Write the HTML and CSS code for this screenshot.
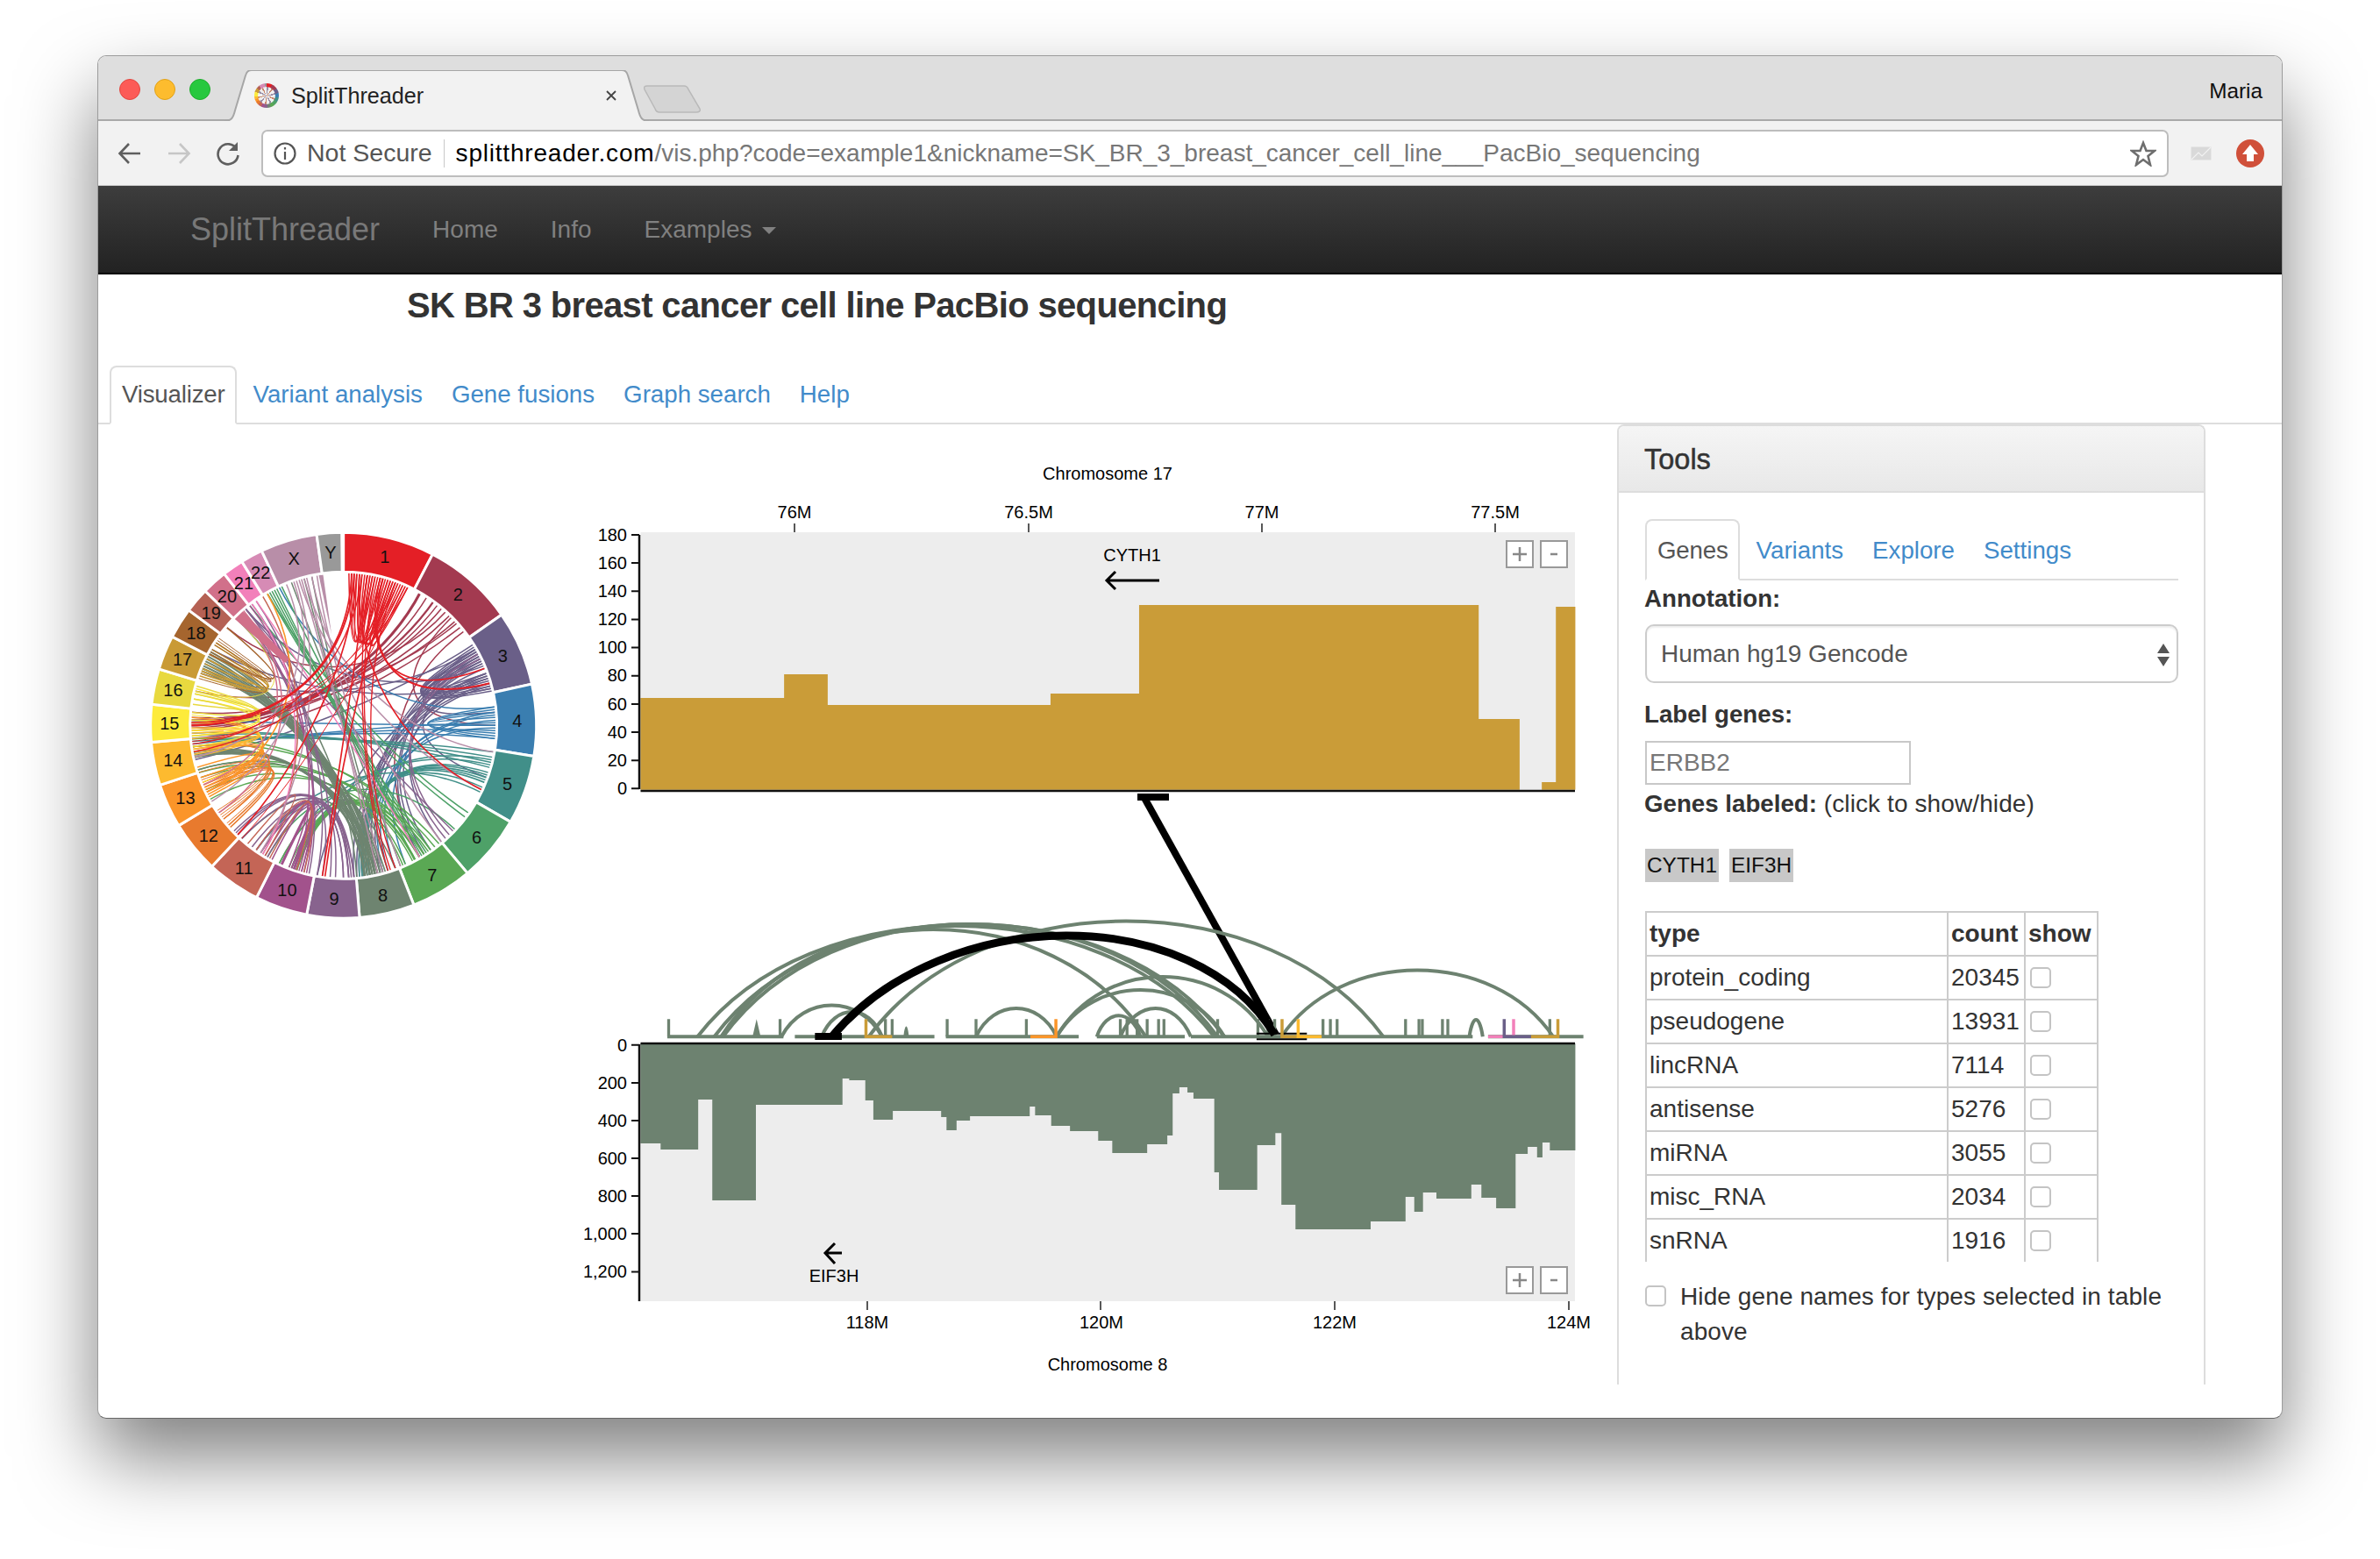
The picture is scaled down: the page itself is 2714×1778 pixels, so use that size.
FILE: index.html
```html
<!DOCTYPE html>
<html lang="en">
<head>
<meta charset="utf-8">
<title>SplitThreader</title>
<link rel="stylesheet" href="styles.css">
<script src="chart.js" defer></script>
</head>
<body>
<div class="window">
  <div class="tabstrip">
    <div class="lights"><i class="light red"></i><i class="light amber"></i><i class="light green"></i></div>
    <div class="chrome-tab">
      <svg class="tab-shape" viewBox="0 0 484 58" preserveAspectRatio="none"><path d="M0 58C8 58 10 54 12 46L24 6C25 2 27 0 31 0H453C457 0 459 2 460 6L472 46C474 54 476 58 484 58" /></svg>
      <span class="favicon"></span>
      <span class="tab-title">SplitThreader</span>
      <svg class="tab-close" viewBox="0 0 12 12"><path d="M1 1L11 11M11 1L1 11"/></svg>
    </div>
    <svg class="new-tab" viewBox="0 0 66 32"><path d="M4 1H46C49 1 50 2 51 5L64 27C65 30 63 31 60 31H18C15 31 14 30 13 27L1 5C0 2 1 1 4 1Z"/></svg>
    <span class="profile">Maria</span>
  </div>
  <div class="toolbar">
    <svg class="tool-icon" viewBox="0 0 28 28"><path d="M26 14H3M13 3L2.500 14L13 25"/></svg>
    <svg class="tool-icon faded" viewBox="0 0 28 28"><path d="M2 14H25M15 3L25.500 14L15 25"/></svg>
    <svg class="tool-icon" viewBox="0 0 28 28"><path d="M24 9A11.500 11.500 0 1 0 25.500 16"/><path class="solid" d="M25 1V11H15Z"/></svg>
    <div class="omnibox">
      <svg class="info-icon" viewBox="0 0 26 26"><circle cx="13" cy="13" r="11.500"/><path d="M13 11V20M13 6V8.500"/></svg>
      <span class="not-secure">Not Secure</span>
      <span class="omni-sep"></span>
      <span class="url"><span class="url-host">splitthreader.com</span>/vis.php?code=example1&amp;nickname=SK_BR_3_breast_cancer_cell_line___PacBio_sequencing</span>
      <svg class="star" viewBox="0 0 30 30"><path d="M15 3L18.500 12H28L20.500 18L23 28L15 22L7 28L9.500 18L2 12H11.500Z"/></svg>
    </div>
    <svg class="mail-icon" viewBox="0 0 24 16"><rect x="0" y="0" width="24" height="16"/><path d="M1 15L9 7L13 11L23 1"/></svg>
    <svg class="update-icon" viewBox="0 0 32 32"><circle cx="16" cy="16" r="16"/><path d="M16 6L25 17H20V25H12V17H7Z"/></svg>
  </div>
  <nav class="navbar">
    <span class="brand">SplitThreader</span>
    <a class="nav-link">Home</a>
    <a class="nav-link">Info</a>
    <a class="nav-link">Examples<i class="caret"></i></a>
  </nav>
  <main class="content">
    <h1 class="page-title">SK BR 3 breast cancer cell line PacBio sequencing</h1>
    <ul class="tabs main-tabs">
      <li class="tab active">Visualizer</li>
      <li class="tab">Variant analysis</li>
      <li class="tab">Gene fusions</li>
      <li class="tab">Graph search</li>
      <li class="tab">Help</li>
    </ul>
    <div class="workspace">
      <svg class="circos" viewBox="0 0 1500 1500">
        <g id="chords"></g>
        <g id="segments"></g>
        <g id="segment-labels"></g>
      </svg>
      <svg class="genome" viewBox="650 510 1194 1080">
        <text class="chart-text" x="1263" y="547" text-anchor="middle">Chromosome 17</text>
        <text class="chart-text" x="906" y="591" text-anchor="middle">76M</text>
        <text class="chart-text" x="1173" y="591" text-anchor="middle">76.5M</text>
        <text class="chart-text" x="1439" y="591" text-anchor="middle">77M</text>
        <text class="chart-text" x="1705" y="591" text-anchor="middle">77.5M</text>
        <path class="tick" d="M906 597V607M1173 597V607M1439 597V607M1705 597V607"/>
        <rect class="plot-bg" x="730.500" y="607" width="1065.500" height="295"/>
        <path class="bars-gold" transform="translate(650 510) scale(.7653 .3333)" d="M105 1172V858H319V777H384V882H716V843H848V540H1354V930H1415V1172H1448V1146H1469V546H1498V1172Z"/>
        <path class="axis" d="M730.500 902H1796M729 610V900"/>
        <path class="tick-y" d="M720 610H729M720 642.100H729M720 674.300H729M720 706.400H729M720 738.600H729M720 770.700H729M720 802.900H729M720 835H729M720 867.200H729M720 899.300H729"/>
        <g class="y-labels">
          <text class="chart-text" x="715" y="617">180</text>
          <text class="chart-text" x="715" y="649">160</text>
          <text class="chart-text" x="715" y="681">140</text>
          <text class="chart-text" x="715" y="713">120</text>
          <text class="chart-text" x="715" y="745">100</text>
          <text class="chart-text" x="715" y="777">80</text>
          <text class="chart-text" x="715" y="810">60</text>
          <text class="chart-text" x="715" y="842">40</text>
          <text class="chart-text" x="715" y="874">20</text>
          <text class="chart-text" x="715" y="906">0</text>
        </g>
        <text class="chart-text" x="1291" y="640" text-anchor="middle">CYTH1</text>
        <path class="gene-arrow" d="M1322 662H1262M1272 652L1262 662L1272 672"/>
        <g class="zoom-btn"><rect x="1718" y="617" width="30" height="30"/><path d="M1733 624V640M1725 632H1741"/></g>
        <g class="zoom-btn"><rect x="1757" y="617" width="30" height="30"/><path d="M1768 632H1776"/></g>

        <path class="connector" d="M1305 910L1455 1180"/>
        <path class="bracket" d="M1297 909H1333"/>
        <g transform="translate(650 1030) scale(.7653 .3333)">
          <path class="track" d="M145 457H318M335 457H543M560 457H758M785 457H916M925 457H1345M1368 457H1510"/>
          <path class="stem" d="M147 457V397M313 457V397M470 457V397M480 457V397M562 457V397M605 457V397M680 457V397M820 457V397M830 457V397M845 457V397M860 457V397M877 457V397M885 457V397M965 457V397M1025 457V397M1040 457V397M1050 457V397M1122 457V397M1133 457V397M1143 457V397M1245 457V397M1265 457V397M1270 457V397M1300 457V397M1308 457V397M1460 457V397"/>
          <path class="stem-fill" d="M272 457L278 397L284 457ZM497 457C499 410 503 410 505 457Z"/>
          <g class="arc-set">
            <path d="M190 457C359 -48 791 -48 960 457"/>
            <path d="M215 457C382 -56 808 -56 975 457"/>
            <path d="M228 457C390 -56 803 -56 965 457"/>
            <path d="M225 457C364 -32 719 -32 858 457"/>
            <path d="M445 457C614 -70 1043 -70 1212 457"/>
            <path d="M1060 457C1149 154 1376 154 1465 457"/>
            <path d="M315 457C348 314 432 314 465 457"/>
            <path d="M375 457C395 344 445 344 465 457"/>
            <path d="M605 457C631 328 699 328 725 457"/>
            <path d="M725 457C794 184 971 184 1040 457"/>
            <path d="M725 457C780 244 920 244 975 457"/>
            <path d="M785 457C799 361 836 361 850 457"/>
            <path d="M820 457C843 328 902 328 925 457"/>
            <path d="M1340 457C1345 380 1355 380 1360 457"/>
          </g>
          <path class="arc-strong" d="M390 457C560 -3 930 -3 1050 450"/>
          <path class="read-bar" d="M365 450H405M365 462H405"/>
          <path class="read-line" d="M1023 446H1098M1023 466H1098"/>
          <path class="mark gold" d="M441 397V457H480"/>
          <path class="mark orange" d="M724 397V457H686"/>
          <path class="mark gold" d="M1061 397V457H1085"/>
          <path class="mark yellow" d="M1085 397V457H1120"/>
          <path class="mark pink" d="M1406 397V457H1368"/>
          <path class="mark purple" d="M1392 397V457H1432"/>
          <path class="mark gold" d="M1472 397V457H1432"/>
        </g>

        <rect class="plot-bg" x="730.500" y="1190" width="1065.500" height="294"/>
        <path class="bars-green" transform="translate(650 1170) scale(.7653 .3333)" d="M105 60V402H135V423H191V252H212V597H277V270H406V180H416V186H440V255H452V321H481V291H553V312H561V357H576V324H596V309H685V276H693V306H717V342H745V360H787V393H808V435H860V405H890V375H898V231H908V210H920V228H929V249H960V501H967V561H1024V408H1051V367H1060V612H1081V696H1193V669H1245V585H1258V636H1271V570H1291V591H1343V543H1358V588H1380V624H1409V438H1427V414H1441V450H1449V399H1460V426H1498V60Z"/>
        <path class="axis" d="M730.500 1190H1796M729 1191V1484"/>
        <path class="tick-y" d="M720 1191.700H729M720 1235H729M720 1278H729M720 1321H729M720 1364H729M720 1407H729M720 1450.500H729"/>
        <g class="y-labels">
          <text class="chart-text" x="715" y="1199">0</text>
          <text class="chart-text" x="715" y="1242">200</text>
          <text class="chart-text" x="715" y="1285">400</text>
          <text class="chart-text" x="715" y="1328">600</text>
          <text class="chart-text" x="715" y="1371">800</text>
          <text class="chart-text" x="715" y="1414">1,000</text>
          <text class="chart-text" x="715" y="1457">1,200</text>
        </g>
        <path class="gene-arrow" d="M960 1429H943M952 1418L941 1429L952 1441"/>
        <text class="chart-text" x="951" y="1462" text-anchor="middle">EIF3H</text>
        <g class="zoom-btn"><rect x="1718" y="1445" width="30" height="30"/><path d="M1733 1452V1468M1725 1460H1741"/></g>
        <g class="zoom-btn"><rect x="1757" y="1445" width="30" height="30"/><path d="M1768 1460H1776"/></g>
        <path class="tick" d="M989 1484V1494M1255 1484V1494M1522 1484V1494M1789 1484V1494"/>
        <text class="chart-text" x="989" y="1515" text-anchor="middle">118M</text>
        <text class="chart-text" x="1256" y="1515" text-anchor="middle">120M</text>
        <text class="chart-text" x="1522" y="1515" text-anchor="middle">122M</text>
        <text class="chart-text" x="1789" y="1515" text-anchor="middle">124M</text>
        <text class="chart-text" x="1263" y="1563" text-anchor="middle">Chromosome 8</text>
      </svg>
      <aside class="panel">
        <h2 class="panel-head">Tools</h2>
        <div class="panel-body">
          <ul class="tabs tool-tabs">
            <li class="tab active">Genes</li>
            <li class="tab">Variants</li>
            <li class="tab">Explore</li>
            <li class="tab">Settings</li>
          </ul>
          <label class="field-label first">Annotation:</label>
          <div class="select">
            <span>Human hg19 Gencode</span>
            <svg class="select-arrows" viewBox="0 0 14 26"><path d="M7 0L14 11H0ZM0 15H14L7 26Z"/></svg>
          </div>
          <label class="field-label second">Label genes:</label>
          <input class="gene-input" type="text" placeholder="ERBB2">
          <p class="labeled"><b>Genes labeled:</b> (click to show/hide)</p>
          <div class="gene-tags"><span class="gene-tag">CYTH1</span><span class="gene-tag">EIF3H</span></div>
          <div class="table-clip">
            <table class="type-table">
              <colgroup><col class="col-type"><col class="col-count"><col class="col-show"></colgroup>
              <tr><th>type</th><th>count</th><th>show</th></tr>
              <tr><td>protein_coding</td><td>20345</td><td><input class="check" type="checkbox"></td></tr>
              <tr><td>pseudogene</td><td>13931</td><td><input class="check" type="checkbox"></td></tr>
              <tr><td>lincRNA</td><td>7114</td><td><input class="check" type="checkbox"></td></tr>
              <tr><td>antisense</td><td>5276</td><td><input class="check" type="checkbox"></td></tr>
              <tr><td>miRNA</td><td>3055</td><td><input class="check" type="checkbox"></td></tr>
              <tr><td>misc_RNA</td><td>2034</td><td><input class="check" type="checkbox"></td></tr>
              <tr><td>snRNA</td><td>1916</td><td><input class="check" type="checkbox"></td></tr>
            </table>
          </div>
          <div class="hide-row">
            <input class="check" type="checkbox">
            <span>Hide gene names for types selected in table above</span>
          </div>
        </div>
      </aside>
    </div>
  </main>
</div>
</body>
</html>
```
FILE: styles.css
```css
* { box-sizing: border-box; }
html, body { margin: 0; height: 100%; }
body {
  width: 2714px;
  height: 1778px;
  padding: 63px 111px 0;
  overflow: hidden;
  background: #fff;
  font-family: "Liberation Sans", Arial, sans-serif;
  color: #333;
}
.window {
  width: 2492px;
  height: 1555px;
  border: 1px solid #9c9c9c;
  border-bottom-color: #666;
  border-radius: 10px;
  overflow: hidden;
  background: #fff;
  box-shadow: 0 44px 88px rgba(0, 0, 0, .5);
}

/* browser chrome */
.tabstrip {
  display: flex;
  height: 74px;
  padding-left: 24px;
  background: #dedede;
  border-bottom: 2px solid #a9a9a9;
}
.lights { display: flex; gap: 16px; margin-top: 26px; align-self: flex-start; }
.light { display: block; width: 24px; height: 24px; border-radius: 50%; }
.light.red { background: #fc5b57; border: 1px solid #e2463f; }
.light.amber { background: #fdbc2e; border: 1px solid #e1a116; }
.light.green { background: #27c83f; border: 1px solid #1dad2b; }
.chrome-tab {
  position: relative;
  display: flex;
  align-items: center;
  align-self: flex-end;
  width: 484px;
  height: 58px;
  margin: 0 0 -2px 16px;
  padding: 0 37px 0 34px;
}
.tab-shape { position: absolute; inset: 0; width: 100%; height: 100%; fill: #f2f2f2; stroke: #a6a6a6; stroke-width: 2; }
.favicon {
  position: relative;
  width: 28px;
  height: 28px;
  border-radius: 50%;
  background: conic-gradient(#e41f26 0 27deg, #a33a50 0 55deg, #6a5f88 0 78deg, #3a7eb0 0 99deg, #418f89 0 120deg, #4ea168 0 140deg, #5aa854 0 159deg, #6e8470 0 175deg, #88638e 0 191deg, #a2528c 0 207deg, #c46556 0 223deg, #e87a2e 0 239deg, #fb9529 0 252deg, #fdba2f 0 265deg, #fdeb3b 0 287deg, #c99a35 0 306deg, #b56154 0 322deg, #d68bb5 0 352deg, #999 0);
}
.favicon::after {
  content: "";
  position: absolute;
  inset: 4px;
  border-radius: 50%;
  background: repeating-conic-gradient(#9a8fa8 0 14deg, #eee 14deg 36deg, #c98a70 36deg 48deg, #f2f2f2 48deg 72deg);
}
.tab-title { position: relative; margin-left: 14px; font-size: 25.200px; color: #222; }
.tab-close { position: relative; width: 12px; height: 14px; margin-left: auto; fill: none; stroke: #444; stroke-width: 1.800; }
.new-tab { width: 66px; height: 32px; margin: 33px 0 0 -6px; align-self: flex-start; fill: #d4d4d4; stroke: #b9b9b9; stroke-width: 1.500; }
.profile { margin: 26px 0 0 auto; padding-right: 22px; align-self: flex-start; font-size: 24.300px; line-height: 28px; color: #111; }
.toolbar {
  display: flex;
  align-items: center;
  gap: 28px;
  height: 74px;
  padding-left: 22px;
  background: #f2f2f2;
  border-bottom: 1px solid #c9c9c9;
}
.tool-icon { width: 28px; height: 28px; fill: none; stroke: #5f5f5f; stroke-width: 2.600; }
.tool-icon.faded { stroke: #c6c6c6; }
.tool-icon .solid { fill: #5f5f5f; stroke: none; }
.omnibox {
  display: flex;
  align-items: center;
  width: 2175px;
  height: 54px;
  margin-left: -4px;
  padding: 0 12px;
  background: #fff;
  border: 2px solid #bdbdbd;
  border-radius: 7px;
  font-size: 28px;
}
.info-icon { width: 26px; height: 26px; fill: none; stroke: #555; stroke-width: 2.200; }
.not-secure { margin-left: 12px; color: #555; font-size: 28.500px; }
.omni-sep { width: 1px; height: 32px; margin: 0 13px; background: #c8c8c8; }
.url { color: #777; white-space: nowrap; }
.url-host { color: #000; letter-spacing: .8px; }
.star { width: 30px; height: 30px; margin-left: auto; fill: #fff; stroke: #6e6e6e; stroke-width: 2.600; }
.mail-icon { width: 24px; height: 16px; margin-left: -3px; fill: #d9d9d9; stroke: #f2f2f2; stroke-width: 1.100; }
.mail-icon path { fill: none; }
.update-icon { width: 32px; height: 32px; fill: #d0503a; }
.update-icon path { fill: #fff; }

/* site navbar */
.navbar {
  display: flex;
  align-items: center;
  gap: 60px;
  height: 101px;
  padding-left: 105px;
  background: linear-gradient(#3d3d3d, #222);
  border-bottom: 2px solid #000;
}
.brand { font-size: 36px; color: #787878; }
.nav-link { font-size: 28px; color: #808080; }
.caret {
  display: inline-block;
  margin-left: 12px;
  vertical-align: middle;
  border-top: 8px solid #808080;
  border-left: 8px solid transparent;
  border-right: 8px solid transparent;
}

/* page */
.page-title {
  margin: 11px 0 0;
  padding-left: 352px;
  font-size: 40px;
  line-height: 48px;
  font-weight: 700;
  letter-spacing: -.65px;
  color: #333;
}
.tabs {
  display: flex;
  margin: 0;
  padding: 0;
  list-style: none;
  border-bottom: 2px solid #ddd;
  font-size: 27.700px;
  color: #428bca;
}
.tab { margin-right: 5px; margin-bottom: -2px; padding: 0 12px; border: 2px solid transparent; }
.tab.active { padding-right: 11px; letter-spacing: -.2px; background: #fff; color: #555; border-color: #ddd; border-bottom-color: #fff; border-radius: 8px 8px 0 0; }
.main-tabs { height: 67px; margin-top: 45px; padding-left: 13px; line-height: 62px; }
.workspace { display: flex; align-items: flex-start; }

/* circos */
.circos { display: block; flex: none; width: 500px; height: 500px; margin: 96px 0 0 38px; }
.segment { stroke: #fff; stroke-width: 9; }
.segment-label { font-size: 60px; text-anchor: middle; fill: #111; }
.chord { fill: none; }

/* genome plots */
.genome { display: block; flex: none; width: 1194px; height: 1080px; margin-top: 26px; }
.chart-text { font-size: 20px; fill: #000; }
.y-labels { text-anchor: end; }
.plot-bg { fill: #ededed; }
.bars-gold { fill: #ca9c38; }
.bars-green { fill: #6d8270; }
.axis { fill: none; stroke: #111; stroke-width: 2.500; }
.tick { stroke: #222; stroke-width: 1.500; }
.tick-y { stroke: #111; stroke-width: 2; }
.gene-arrow { fill: none; stroke: #000; stroke-width: 3; }
.zoom-btn rect { fill: #fff; stroke: #999; stroke-width: 2; }
.zoom-btn path { fill: none; stroke: #888; stroke-width: 2.500; }
.connector { stroke: #000; stroke-width: 8; fill: none; }
.bracket { stroke: #000; stroke-width: 8; fill: none; }
.track, .stem, .arc-set path, .arc-strong, .read-bar, .read-line, .mark { fill: none; vector-effect: non-scaling-stroke; }
.track { stroke: #6d8270; stroke-width: 4; }
.stem { stroke: #6d8270; stroke-width: 3.300; }
.stem-fill { fill: #6d8270; }
.arc-set path { stroke: #6d8270; stroke-width: 4; }
.arc-strong { stroke: #000; stroke-width: 9; }
.read-bar { stroke: #000; stroke-width: 4; }
.read-line { stroke: #000; stroke-width: 2; }
.mark { stroke-width: 3.500; }
.mark.gold { stroke: #ca9c38; }
.mark.orange { stroke: #fb9529; }
.mark.yellow { stroke: #fdba2f; }
.mark.pink { stroke: #f280ba; }
.mark.purple { stroke: #6a5f88; }

/* tools panel */
.panel {
  flex: none;
  width: 671px;
  height: 1095px;
  overflow: hidden;
  border: 2px solid #ddd;
  border-bottom: 0;
  border-radius: 8px 8px 0 0;
  font-size: 28px;
}
.panel-head {
  display: flex;
  align-items: center;
  height: 76px;
  margin: 0;
  padding: 3px 0 0 29px;
  background: linear-gradient(#f5f5f5, #e8e8e8);
  border-bottom: 2px solid #ddd;
  font-size: 32.500px;
  font-weight: 400;
  -webkit-text-stroke: .5px #333;
}
.panel-body { padding: 30px 29px 0 30px; }
.tool-tabs { height: 70px; line-height: 67px; }
.field-label { display: block; font-size: 27.700px; font-weight: 700; line-height: 40px; margin-left: -1px; }
.field-label.first { margin-top: 1px; }
.field-label.second { margin-top: 16px; }
.select {
  position: relative;
  display: flex;
  align-items: center;
  height: 67px;
  margin-top: 9px;
  padding-left: 16px;
  border: 2px solid #ccc;
  border-radius: 10px;
  box-shadow: inset 0 2px 2px rgba(0, 0, 0, .07);
  color: #555;
  font-size: 28px;
}
.select-arrows { position: absolute; right: 8px; top: 20px; width: 14px; height: 26px; fill: #555; }
.gene-input {
  display: block;
  width: 303px;
  height: 50px;
  margin-top: 10px;
  padding: 0 3px;
  border: 2px solid #c8c8c8;
  font: 28px "Liberation Sans", Arial, sans-serif;
}
.gene-input::placeholder { color: #777; opacity: 1; }
.labeled { margin: 2px 0 0 -1px; font-size: 28px; line-height: 40px; letter-spacing: .1px; }
.labeled b { font-size: 27.700px; letter-spacing: 0; }
.gene-tags { display: flex; gap: 12px; margin: 31px 0 0; }
.gene-tag { height: 38px; padding: 0 2px; background: #c8c8c8; color: #111; font-size: 24.400px; line-height: 38px; }
.table-clip { height: 400px; margin-top: 33px; overflow: hidden; }
.type-table { table-layout: fixed; width: 515px; border-collapse: collapse; border: 2px solid #ccc; }
.col-type { width: 344px; }
.col-count { width: 88px; }
.col-show { width: 83px; }
.type-table th, .type-table td { height: 50px; padding: 0 3px; border: 2px solid #ccc; text-align: left; font-size: 28px; line-height: 40px; white-space: nowrap; }
.check {
  appearance: none;
  display: block;
  flex: none;
  width: 24px;
  height: 24px;
  margin: 0 0 0 2px;
  background: #fff;
  border: 2px solid #c4c4c4;
  border-radius: 5px;
}
.hide-row { display: flex; align-items: flex-start; gap: 16px; margin-top: 20px; line-height: 40px; font-size: 28px; letter-spacing: .1px; }
.hide-row .check { margin: 7px 0 0; }
```
FILE: chart.js
```js
(function () {
  var NS = 'http://www.w3.org/2000/svg';
  var CX = 725, CY = 742, R_IN = 525, R_OUT = 660, R_LABEL = 595, BUNDLE = 0.4, SPREAD = 0.65;
  var chroms = [
    ['1', 0, 27.5, '#e41f26'], ['2', 27.5, 55, '#a33a50'], ['3', 55, 77.6, '#6a5f88'],
    ['4', 77.6, 99.2, '#3a7eb0'], ['5', 99.2, 120, '#418f89'], ['6', 120, 140, '#4ea168'],
    ['7', 140, 158.6, '#5aa854'], ['8', 158.6, 175.2, '#6e8470'], ['9', 175.2, 191, '#88638e'],
    ['10', 191, 206.8, '#a2528c'], ['11', 206.8, 223, '#c46556'], ['12', 223, 238.7, '#e87a2e'],
    ['13', 238.7, 252, '#fb9529'], ['14', 252, 265, '#fdba2f'], ['15', 265, 276.3, '#fdeb3b'],
    ['16', 276.3, 287, '#e8d93f'], ['17', 287, 297.4, '#c99a35'], ['18', 297.4, 306.7, '#a5652e'],
    ['19', 306.7, 314.2, '#b56154'], ['20', 314.2, 321.8, '#d1708a'], ['21', 321.8, 328.2, '#f280ba'],
    ['22', 328.2, 334.9, '#d68bb5'], ['X', 334.9, 352, '#b88ea8'], ['Y', 352, 359.5, '#999999']
  ];
  // [colour index, list of [from angle, to angle, optional width]]
  var links = [
    [1, [[30,270,9],[33,268],[36,272,7],[40,275],[48,283],[50,265],[45,90],[52,150],[42,310],[38,271],[44,269],[47,273]]],
    [2, [[60,172],[62,170],[64,174],[66,168],[70,176],[72,166],[74,173],[58,257],[60,290],[62,85],[70,110],[72,140],[75,145],[63,150],[65,148],[67,320],[74,300],[68,190],[71,175],
         [59,74],[61,72],[63,76],[62,70],[60,75],[64,73],[66,76],[61,77],[65,71]]],
    [3, [[83,335],[90,272],[92,262],[95,263],[85,160],[88,156],[86,165],[91,163],[83,95],[85,93],[87,90],[84,94],[89,262]]],
    [4, [[108,172,5],[110,172.5,5],[112,171,5],[114,173],[105,205],[103,200],[116,215],[100,264],[102,265],[104,266],[106,267],[109,174],[111,170]]],
    [5, [[333,148],[334,150],[332,152],[336,147],[330,145],[331,149],[133,210],[127,322],[125,330]]],
    [6, [[198,152,8],[199,150,6],[200,148,5],[253,150],[252,148],[250,146],[241,153],[201,145],[205,156],[265,143],[262,141],[245,157]]],
    [7, [[166,297,6],[167,299,6],[168,296,6],[169,295,6],[170,298,6],[171,294,6],[165,293,6],[172,292,5],[164,291,5],[170,259,8],[172,260,8],[168,258,8],[175,315],[160,253],[165,345],[163,348],[158,340],[172,222],[169,292,6],[167,258,6]]],
    [8, [[180,225],[178,215],[183,210],[185,320],[178,200],[178,222],[180,224],[176,226],[195,325],[193,317],[188,215],[176,213],[177,217],[190,323],[138,64],[136,62],[134,320]]],
    [9, [[196,200],[197,208],[199,204,9],[198,322],[194,318],[201,211],[196,213]]],
    [10, [[211,219],[212,328],[215,195],[209,198]]],
    [11, [[230,245,3],[232,250,3],[234,247,3],[236,252,3],[232,262],[228,244],[233,248,3],[235,249,3],[229,246]]],
    [12, [[244,273],[246,272,4],[242,250],[243,254],[244,330,5],[247,262],[248,260],[245,261]]],
    [13, [[258,268,4],[260,267,4],[262,266,4],[261,265,4],[259,269]]],
    [14, [[268,280],[271,284],[266,282],[274,248,3]]],
    [15, [[282,278],[283,275],[285,272],[315,283,3],[280,262]]],
    [16, [[290,298,5],[292,296,5],[294,300],[291,303,5],[289,302]]],
    [17, [[300,303,3],[302,305,3],[304,298,3],[299,288,3],[298,310]]],
    [19, [[319,235],[317,247]]],
    [20, [[323,212],[325,150]]],
    [22, [[338,258],[341,240],[344,165],[346,167],[343,115],[348,140],[342,213],[345,100],[350,158]]],
    [0, [[3,12],[5,9],[7,15],[8,19],[10,14],[11,18],[13,22],[14,21],[16,25],[17,20],[19,24],[4,17],[2,11],[6,20],[9,23],
         [14,68,5],[15,74,6],[6,115,5],[4,270,6],[3,271,5],[7,263,4],[5,224,5],[9,188,5],[18,187,5],[12,162,4],[20,160,4],[25,260,4],[23,270,3],[21,264,3],[24,222,3],[10,163,4]]]
  ];
  function point(angle, r) {
    var t = angle * Math.PI / 180;
    return [CX + r * Math.sin(t), CY - r * Math.cos(t)];
  }
  // Control point: pulled towards the chromosome's middle, but keeping part of the
  // endpoint's own angle so the lines leave the ring almost radially.
  function hub(angle) {
    for (var i = 0; i < chroms.length; i++) {
      if (angle >= chroms[i][1] && angle <= chroms[i][2]) {
        var mid = (chroms[i][1] + chroms[i][2]) / 2;
        return point(mid + (angle - mid) * SPREAD, R_IN * BUNDLE);
      }
    }
    return [CX, CY];
  }
  function make(tag, attrs, parent) {
    var el = document.createElementNS(NS, tag);
    for (var k in attrs) el.setAttribute(k, attrs[k]);
    parent.appendChild(el);
    return el;
  }
  var chordLayer = document.getElementById('chords');
  links.forEach(function (group) {
    var colour = chroms[group[0]][3];
    group[1].forEach(function (l) {
      var a = point(l[0], R_IN + 6), b = point(l[1], R_IN + 6);
      var ca = hub(l[0]), cb = hub(l[1]);
      make('path', {
        'class': 'chord',
        d: 'M' + a + 'C' + ca + ' ' + cb + ' ' + b,
        stroke: colour,
        'stroke-width': l[2] || 4.5
      }, chordLayer);
    });
  });
  make('path', { d: 'M350 375L375 345L540 515L525 528Z', fill: '#d1708a' }, chordLayer);
  make('path', { d: 'M640 226L655 224L684 430Z', fill: '#b88ea8' }, chordLayer);
  var segLayer = document.getElementById('segments');
  var labelLayer = document.getElementById('segment-labels');
  chroms.forEach(function (c) {
    var p1 = point(c[1], R_OUT), p2 = point(c[2], R_OUT), p3 = point(c[2], R_IN), p4 = point(c[1], R_IN);
    make('path', {
      'class': 'segment',
      fill: c[3],
      d: 'M' + p1 + 'A' + R_OUT + ' ' + R_OUT + ' 0 0 1 ' + p2 + 'L' + p3 + 'A' + R_IN + ' ' + R_IN + ' 0 0 0 ' + p4 + 'Z'
    }, segLayer);
    var m = point((c[1] + c[2]) / 2, R_LABEL);
    var t = make('text', { 'class': 'segment-label', x: m[0], y: m[1] + 21 }, labelLayer);
    t.textContent = c[0];
  });
})();
```
